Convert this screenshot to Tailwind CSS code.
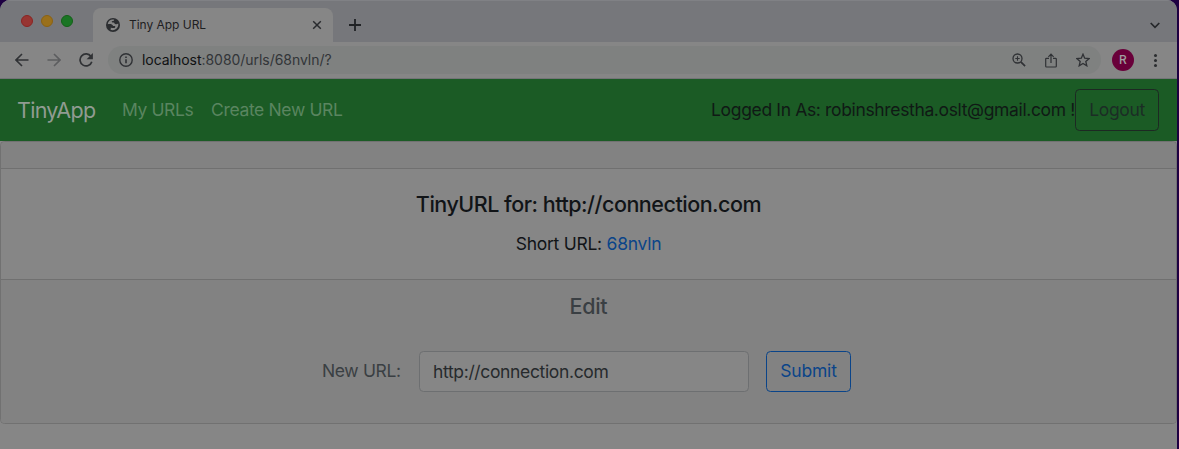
<!DOCTYPE html>
<html lang="en">
<head>
<meta charset="utf-8">
<title>Tiny App URL</title>
<script src="https://cdn.jsdelivr.net/npm/@tailwindcss/browser@4"></script>
</head>
<body class="h-[449px] w-[1179px] overflow-hidden bg-[#1e0042] font-['Inter',sans-serif] text-[17.5px] leading-[26px] tracking-[-0.35px] whitespace-nowrap text-[#111417]">
<div class="flex h-[449px] w-[1177px] flex-col overflow-hidden rounded-t-[10px] bg-[#868686]">
  <!-- Tab strip -->
  <div class="flex h-[42px] shrink-0 items-end border-t border-[#808185] bg-[#76777b]">
    <div class="mb-[15px] ml-[21px] flex gap-2">
      <span class="size-3 rounded-full border border-[#8a2422] bg-[#973532]"></span>
      <span class="size-3 rounded-full border border-[#8b6213] bg-[#9a701b]"></span>
      <span class="size-3 rounded-full border border-[#136118] bg-[#1a7524]"></span>
    </div>
    <div class="ml-5 flex h-[34px] w-[240px] items-center rounded-t-lg bg-[#868686] pr-[11px] pl-[13px]">
      <svg class="size-[14px]" viewBox="0 0 14 14"><circle cx="7" cy="7" r="7" fill="#2b2d30"/><path d="M8.200 1.800C5 1 2 3 1.700 6.200c1.300-.1 3-.2 4.100.3 1 .5 1 1.500 2.200 1.600 1 0 1.500.3 1.200 1.100-.4.800-1.500.9-2.600.8l-2-.2c.3.700.3 1.500-.2 2 2.700 1.100 6.200-.3 7.400-3 .6-1.200.6-2.300.4-3.300-.8.700-2 .9-3 .5-.9-.4-.6-1.200-1.400-1.500-.8-.2-1.700.3-2.100-.4-.3-.8.700-1.100 1.500-1.200.6-.1 1-.5 1-1.100z" fill="#868686"/></svg>
      <span class="ml-[9px] text-xs tracking-[-0.03px] text-[#1e2022]">Tiny App URL</span>
      <svg class="ml-auto size-[10px]" viewBox="0 0 10 10" fill="none" stroke="#292b2e" stroke-width="1.5"><path d="M1.200 1.200l7.600 7.600M8.800 1.200L1.200 8.800"/></svg>
    </div>
    <svg class="mb-[11px] ml-4 size-3" viewBox="0 0 12 12" fill="none" stroke="#202225" stroke-width="1.800"><path d="M6 0v12M0 6h12"/></svg>
    <svg class="mr-[17px] mb-[13px] ml-auto h-[7px] w-[10px]" viewBox="0 0 10 7" fill="none" stroke="#25272a" stroke-width="1.700"><path d="M.7 1l4.300 4.300L9.300 1"/></svg>
  </div>
  <!-- Address bar -->
  <div class="flex h-[37px] shrink-0 items-center border-b border-[#737477] pl-[15px]">
    <svg class="size-[14px]" viewBox="0 0 14 14" fill="none" stroke="#303235" stroke-width="1.600"><path d="M13.500 7H1.300M7 1L1 7l6 6"/></svg>
    <svg class="ml-[18px] size-[14px]" viewBox="0 0 14 14" fill="none" stroke="#5c5d5f" stroke-width="1.600"><path d="M.5 7h12.200M7 1l6 6-6 6"/></svg>
    <svg class="ml-[18px] size-[14px]" viewBox="0 0 14 14" fill="none"><path d="M12 3.500A6 6 0 1 0 12.800 8.700" stroke="#303235" stroke-width="1.700"/><path d="M13.900 0v6.300H7.600z" fill="#303235"/></svg>
    <div class="ml-[15px] flex h-7 w-[993px] items-center rounded-full bg-[#7f8180] pr-[11px] pl-[11px]">
      <svg class="size-[14px]" viewBox="0 0 14 14" fill="none" stroke="#303235" stroke-width="1.400"><circle cx="7" cy="7" r="6.200"/><path d="M7 6.200v4M7 3.400v1.500" stroke-width="1.600"/></svg>
      <span class="ml-[9px] text-sm tracking-[-0.04px] text-[#323538]"><span class="text-[#101113]">localhost</span>:8080/urls/68nvln/?</span>
      <svg class="ml-auto size-[14px]" viewBox="0 0 14 14" fill="none" stroke="#303235" stroke-width="1.300"><circle cx="5.500" cy="5.500" r="4.500"/><path d="M3.300 5.500h4.400M5.500 3.300v4.400" stroke-width="1.100"/><path d="M8.800 8.800l4.300 4.300" stroke-width="1.700"/></svg>
      <svg class="ml-[19px] h-[15px] w-3" viewBox="0 0 12 15" fill="none" stroke="#303235" stroke-width="1.200"><path d="M4 5.300H1.500a.8.8 0 0 0-.8.8v7.100c0 .5.3.800.8.800h9c.5 0 .8-.3.800-.8V6.100a.8.8 0 0 0-.8-.8H8M6 10V1.300M3.400 3.800L6 1.200l2.600 2.600"/></svg>
      <svg class="ml-[19px] size-[14px]" viewBox="0 0 14 14" fill="none" stroke="#303235" stroke-width="1.300"><path d="M7 1.200l1.700 4 4.400.4-3.300 2.900 1 4.300L7 10.500l-3.800 2.300 1-4.300L.9 5.600l4.400-.4z"/></svg>
    </div>
    <span class="ml-[11px] flex size-[22px] items-center justify-center rounded-full bg-[#69003a] text-xs font-medium tracking-normal text-[#a0a0a0]">R</span>
    <div class="ml-5 flex flex-col gap-[2px]">
      <span class="size-[3px] rounded-full bg-[#2b2d30]"></span>
      <span class="size-[3px] rounded-full bg-[#2b2d30]"></span>
      <span class="size-[3px] rounded-full bg-[#2b2d30]"></span>
    </div>
  </div>
  <!-- Site navigation -->
  <nav class="flex h-[62px] shrink-0 items-center bg-[#1b5b25] pr-[18px] pl-[17px] text-[#5a8560]">
    <span class="w-[105px] pb-px text-[21.5px] tracking-[-0.7px] text-[#919b92]">TinyApp</span>
    <span class="w-[89px] tracking-[-0.4px]">My URLs</span>
    <span class="tracking-[-0.35px]">Create New URL</span>
    <span class="ml-auto text-[#101915]">Logged In As: robinshrestha.oslt@gmail.com !</span>
    <button class="flex h-[42px] w-[84px] items-center justify-center rounded-[4.500px] border border-[#1d2923] text-[#1c2d25]">Logout</button>
  </nav>
  <!-- URL card -->
  <main class="flex h-[283px] shrink-0 flex-col overflow-hidden rounded-[4.500px] border border-[#717171] text-center">
    <div class="h-[27px] shrink-0 border-b border-[#707070] bg-[#828282]"></div>
    <div class="h-[111px] shrink-0 border-b border-[#707070] pt-[22px]">
      <h5 class="text-[21.5px] font-medium tracking-[-0.49px]">TinyURL for: http://connection.com</h5>
      <p class="mt-[14px] tracking-[-0.26px]">Short URL: <a class="text-[#0a4489]">68nvln</a></p>
    </div>
    <div class="grow bg-[#828282] pt-[13px] text-[#3a3f43]">
      <h5 class="text-[21.5px] font-medium tracking-[-0.3px]">Edit</h5>
      <form class="mt-8 flex h-[41px] items-center pl-[321px]">
        <label class="w-[97px] pb-[2px] text-left">New URL:</label>
        <input class="h-[41px] w-[330px] rounded-[4.500px] border border-[#6d6f71] bg-[#868686] px-[13px] tracking-[-0.35px] text-[#262a2d]" value="http://connection.com">
        <button type="button" class="ml-[17px] h-[41px] w-[85px] rounded-[4.500px] border border-[#0a4489] pb-[2px] tracking-[-0.2px] text-[#0a4489]">Submit</button>
      </form>
    </div>
  </main>
</div>
</body>
</html>
